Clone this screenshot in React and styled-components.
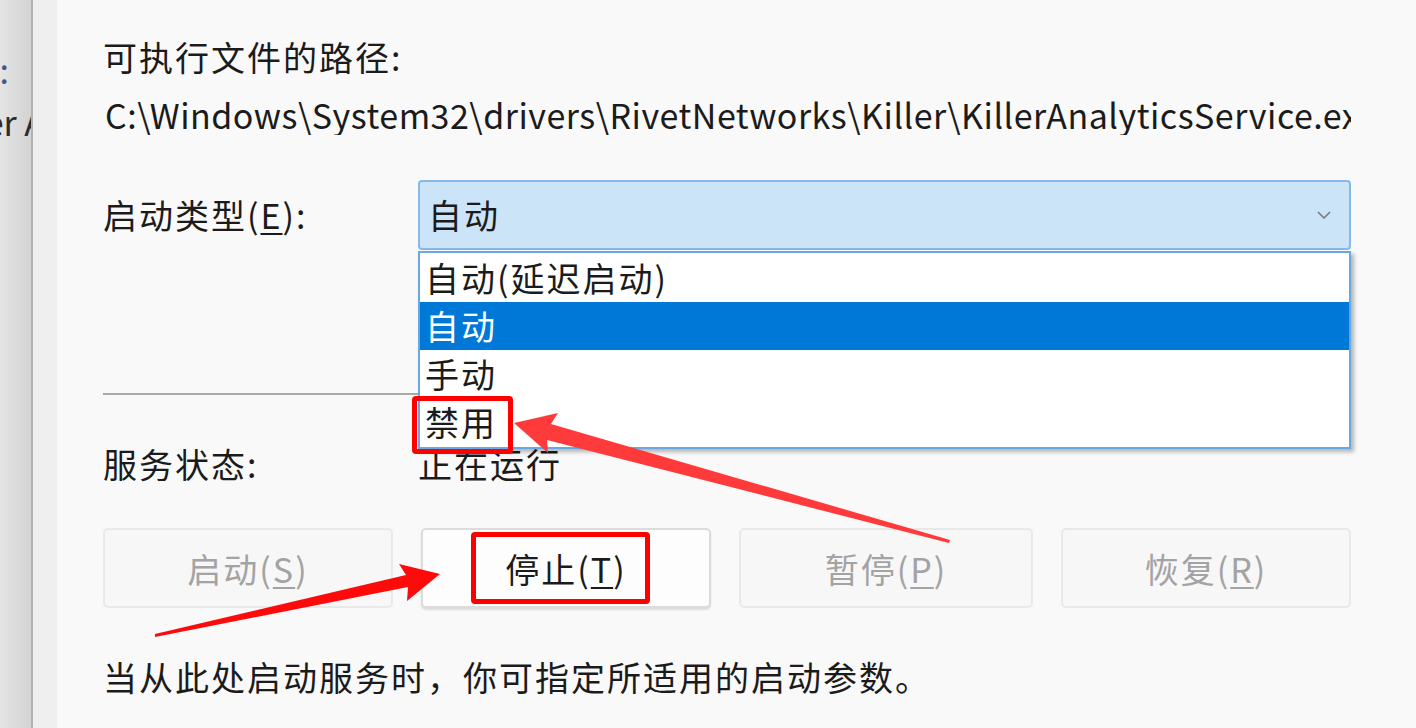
import styled, { createGlobalStyle } from 'styled-components';

const GlobalStyle = createGlobalStyle`
  html, body {
    margin: 0;
    padding: 0;
  }
  body {
    background: #f9f9f9;
    font-family: "Noto Sans CJK SC", "Noto Sans", sans-serif;
    overflow: hidden;
  }
`;

const Screen = styled.div`
  position: relative;
  display: flex;
  width: 1416px;
  height: 728px;
  overflow: hidden;
  background: #f9f9f9;
  color: #1b1b1b;
`;

const BackWindow = styled.div`
  flex: none;
  width: 31px;
  padding-top: 44px;
  background: linear-gradient(to right, #e4e4e4, #d3d3d3);
  overflow: hidden;
  font-size: 34px;
  line-height: 52px;
`;

const BackLine = styled.div`
  display: flex;
  justify-content: flex-end;
  white-space: nowrap;
  color: ${(p) => p.$color || '#2b2b2b'};
  margin-right: ${(p) => p.$shift}px;
`;

const WindowEdge = styled.div`
  flex: none;
  width: 2px;
  background: #b2b2b2;
`;

const Gutter = styled.div`
  flex: none;
  width: 24px;
  background: #efefef;
`;

const Dialog = styled.div`
  flex: 1;
  min-width: 0;
  padding: 37px 65px 0 46px;
  letter-spacing: 2px;
`;

const FieldLabel = styled.p`
  margin: 0;
  font-size: 34px;
  line-height: 40px;
`;

const PathText = styled.div`
  margin-top: 18px;
  font-size: 34px;
  line-height: 40px;
  letter-spacing: 0.5px;
  white-space: nowrap;
  overflow: hidden;
  padding-left: 2px;
`;

const Key = styled.span`
  text-decoration: underline;
  text-decoration-thickness: 2px;
  text-underline-offset: 4px;
`;

const FormRow = styled.div`
  display: grid;
  grid-template-columns: 315px 1fr;
  align-items: center;
  margin-top: ${(p) => p.$top}px;
  font-size: 34px;
  line-height: 40px;
`;

const SelectWrap = styled.div`
  position: relative;
`;

const Select = styled.div`
  box-sizing: border-box;
  height: 70px;
  display: flex;
  align-items: center;
  justify-content: space-between;
  padding: 0 18px 0 8px;
  background: #cce4f7;
  border: 2px solid #86b9ea;
  border-radius: 4px;
`;

const DropList = styled.ul`
  position: absolute;
  top: calc(100% + 1px);
  left: 0;
  right: 0;
  z-index: 2;
  margin: 0;
  padding: 1px 0;
  list-style: none;
  background: #fff;
  border: 2px solid #6aa8e4;
  box-shadow: 3px 3px 4px rgba(0, 0, 0, 0.28);
`;

const Option = styled.li`
  position: relative;
  height: 48px;
  line-height: 48px;
  padding-left: 5px;
  font-size: 34px;
  color: ${(p) => (p.$selected ? '#fff' : '#1b1b1b')};
  background: ${(p) => (p.$selected ? '#0078d7' : 'transparent')};
`;

const Callout = styled.span`
  position: absolute;
  box-sizing: border-box;
  border: 5px solid #ff0000;
  border-radius: 4px;
  left: ${(p) => p.$left}px;
  top: ${(p) => p.$top}px;
  width: ${(p) => p.$w}px;
  height: ${(p) => p.$h}px;
  pointer-events: none;
`;

const Separator = styled.div`
  margin-top: 143px;
  height: 2px;
  background: #a8a8a8;
`;

const ButtonRow = styled.div`
  display: grid;
  grid-template-columns: 290px 290px 294px 290px;
  justify-content: space-between;
  margin-top: 44px;
`;

const Button = styled.div`
  position: relative;
  box-sizing: border-box;
  height: 80px;
  display: flex;
  align-items: center;
  justify-content: center;
  font-size: 34px;
  border-radius: 5px;
  border: 2px solid ${(p) => (p.$disabled ? '#e9e9e9' : '#dcdcdc')};
  background: ${(p) => (p.$disabled ? '#f7f7f7' : '#fdfdfd')};
  color: ${(p) => (p.$disabled ? '#a3a3a3' : '#1b1b1b')};
  box-shadow: ${(p) => (p.$disabled ? 'none' : '0 2px 2px rgba(0,0,0,0.12)')};
`;

const Hint = styled.p`
  margin: 49px 0 0;
  font-size: 34px;
  line-height: 40px;
`;

const Annotations = styled.svg`
  position: absolute;
  left: 0;
  top: 0;
  z-index: 5;
  pointer-events: none;
`;

const Chevron = () => (
  <svg width="14" height="8" viewBox="0 0 14 8">
    <path d="M1 1 L7 7 L13 1" fill="none" stroke="#7a7a7a" strokeWidth="1.6" />
  </svg>
);

export default function App() {
  return (
    <>
      <GlobalStyle />
      <Screen>
        <BackWindow>
          <BackLine $color="#3b5b86" $shift={22}>es:</BackLine>
          <BackLine $shift={-14}>Killer A</BackLine>
        </BackWindow>
        <WindowEdge />
        <Gutter />
        <Dialog>
          <FieldLabel>可执行文件的路径:</FieldLabel>
          <PathText>C:\Windows\System32\drivers\RivetNetworks\Killer\KillerAnalyticsService.exe</PathText>

          <FormRow $top={45}>
            <span>
              启动类型(<Key>E</Key>):
            </span>
            <SelectWrap>
              <Select>
                <span>自动</span>
                <Chevron />
              </Select>
              <DropList>
                <Option>自动(延迟启动)</Option>
                <Option $selected>自动</Option>
                <Option>手动</Option>
                <Option>
                  禁用
                  <Callout $left={-8} $top={-2} $w={101} $h={58} />
                </Option>
              </DropList>
            </SelectWrap>
          </FormRow>

          <Separator />

          <FormRow $top={49}>
            <span>服务状态:</span>
            <span>正在运行</span>
          </FormRow>

          <ButtonRow>
            <Button $disabled>
              启动(<Key>S</Key>)
            </Button>
            <Button>
              停止(<Key>T</Key>)
              <Callout $left={48} $top={2} $w={179} $h={72} />
            </Button>
            <Button $disabled>
              暂停(<Key>P</Key>)
            </Button>
            <Button $disabled>
              恢复(<Key>R</Key>)
            </Button>
          </ButtonRow>

          <Hint>当从此处启动服务时，你可指定所适用的启动参数。</Hint>
        </Dialog>

        <Annotations width="1416" height="728" viewBox="0 0 1416 728">
          <polygon
            fill="#ff0a0a"
            points="440,574 399,564 406,575 155,634 155,637 408,587 407,601"
          />
          <polygon
            fill="#ff3a3a"
            points="514,423 558,413 551,424 950,540 949,543 547,440 548,453"
          />
        </Annotations>
      </Screen>
    </>
  );
}
